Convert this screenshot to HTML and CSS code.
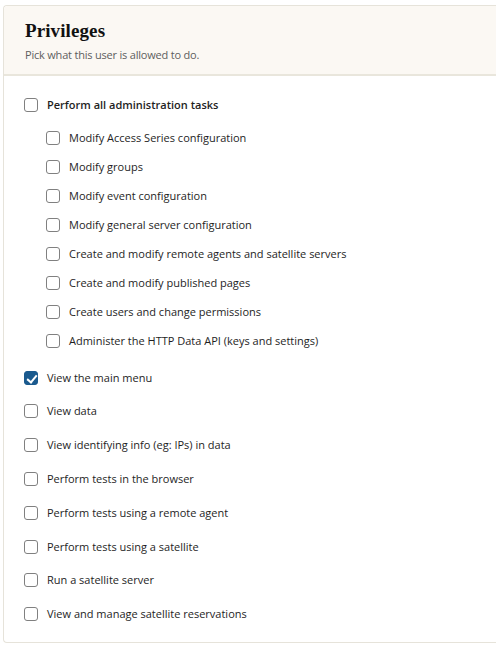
FILE: index.html
```html
<!DOCTYPE html>
<html>
<head>
<meta charset="utf-8">
<link rel="stylesheet" href="styles.css">
</head>
<body>
<section class="card">
  <header class="card-head">
    <h2 class="title">Privileges</h2>
    <p class="subtitle">Pick what this user is allowed to do.</p>
  </header>
  <div class="card-body">
    <label class="row top strong"><input type="checkbox"><span class="box"></span>Perform all administration tasks</label>
    <div class="group">
      <label class="row sub"><input type="checkbox"><span class="box"></span>Modify Access Series configuration</label>
      <label class="row sub"><input type="checkbox"><span class="box"></span>Modify groups</label>
      <label class="row sub"><input type="checkbox"><span class="box"></span>Modify event configuration</label>
      <label class="row sub"><input type="checkbox"><span class="box"></span>Modify general server configuration</label>
      <label class="row sub"><input type="checkbox"><span class="box"></span>Create and modify remote agents and satellite servers</label>
      <label class="row sub"><input type="checkbox"><span class="box"></span>Create and modify published pages</label>
      <label class="row sub"><input type="checkbox"><span class="box"></span>Create users and change permissions</label>
      <label class="row sub"><input type="checkbox"><span class="box"></span>Administer the HTTP Data API (keys and settings)</label>
    </div>
    <label class="row top"><input type="checkbox" checked><span class="box"></span>View the main menu</label>
    <label class="row top"><input type="checkbox"><span class="box"></span>View data</label>
    <label class="row top"><input type="checkbox"><span class="box"></span>View identifying info (eg: IPs) in data</label>
    <label class="row top"><input type="checkbox"><span class="box"></span>Perform tests in the browser</label>
    <label class="row top"><input type="checkbox"><span class="box"></span>Perform tests using a remote agent</label>
    <label class="row top"><input type="checkbox"><span class="box"></span>Perform tests using a satellite</label>
    <label class="row top"><input type="checkbox"><span class="box"></span>Run a satellite server</label>
    <label class="row top"><input type="checkbox"><span class="box"></span>View and manage satellite reservations</label>
  </div>
</section>
</body>
</html>
```
FILE: styles.css
```css
* { box-sizing: border-box; }

html, body { background: #ffffff; }

body {
  margin: 0;
  padding: 5px 0 0 3px;
  font-family: "Open Sans", "Noto Sans", sans-serif;
  color: #1c1c1c;
}

.card {
  border: 1px solid #e6e3da;
  border-right: none;
  border-radius: 4px 0 0 4px;
  background: #ffffff;
}

.card-head {
  background: #fbf8f3;
  border-bottom: 2px solid #e9e6dc;
  border-radius: 4px 0 0 0;
  padding: 14px 0 12px 21px;
}

.title {
  margin: 0;
  font-family: "Liberation Serif", "DejaVu Serif", serif;
  font-weight: bold;
  font-size: 19px;
  line-height: 22px;
  color: #111111;
  letter-spacing: 0.1px;
}

.subtitle {
  margin: 5px 0 0;
  font-size: 11px;
  line-height: 15px;
  color: #5e5e5e;
  letter-spacing: -0.2px;
}

.card-body {
  padding: 12px 0 11px 20px;
  display: flex;
  flex-direction: column;
}

.row {
  display: flex;
  align-items: center;
  font-size: 11px;
  line-height: 16px;
  color: #1e1e1e;
  cursor: pointer;
}

.row input { display: none; }

.row.strong { font-weight: 600; }

.top { height: 33.8px; }

.group {
  display: flex;
  flex-direction: column;
  padding: 2px 0 5px 22px;
}

.sub { height: 29px; }

.box {
  flex: none;
  width: 14px;
  height: 14px;
  margin-right: 9px;
  border: 1px solid #808080;
  border-radius: 3px;
  background: #ffffff;
  position: relative;
}

.row input:checked + .box {
  background: #1a5a8e;
  border-color: #1a5a8e;
}

.row input:checked + .box::after {
  content: "";
  position: absolute;
  left: 4px;
  top: 1px;
  width: 4px;
  height: 8px;
  border: solid #ffffff;
  border-width: 0 2px 2px 0;
  transform: rotate(40deg);
}
```
